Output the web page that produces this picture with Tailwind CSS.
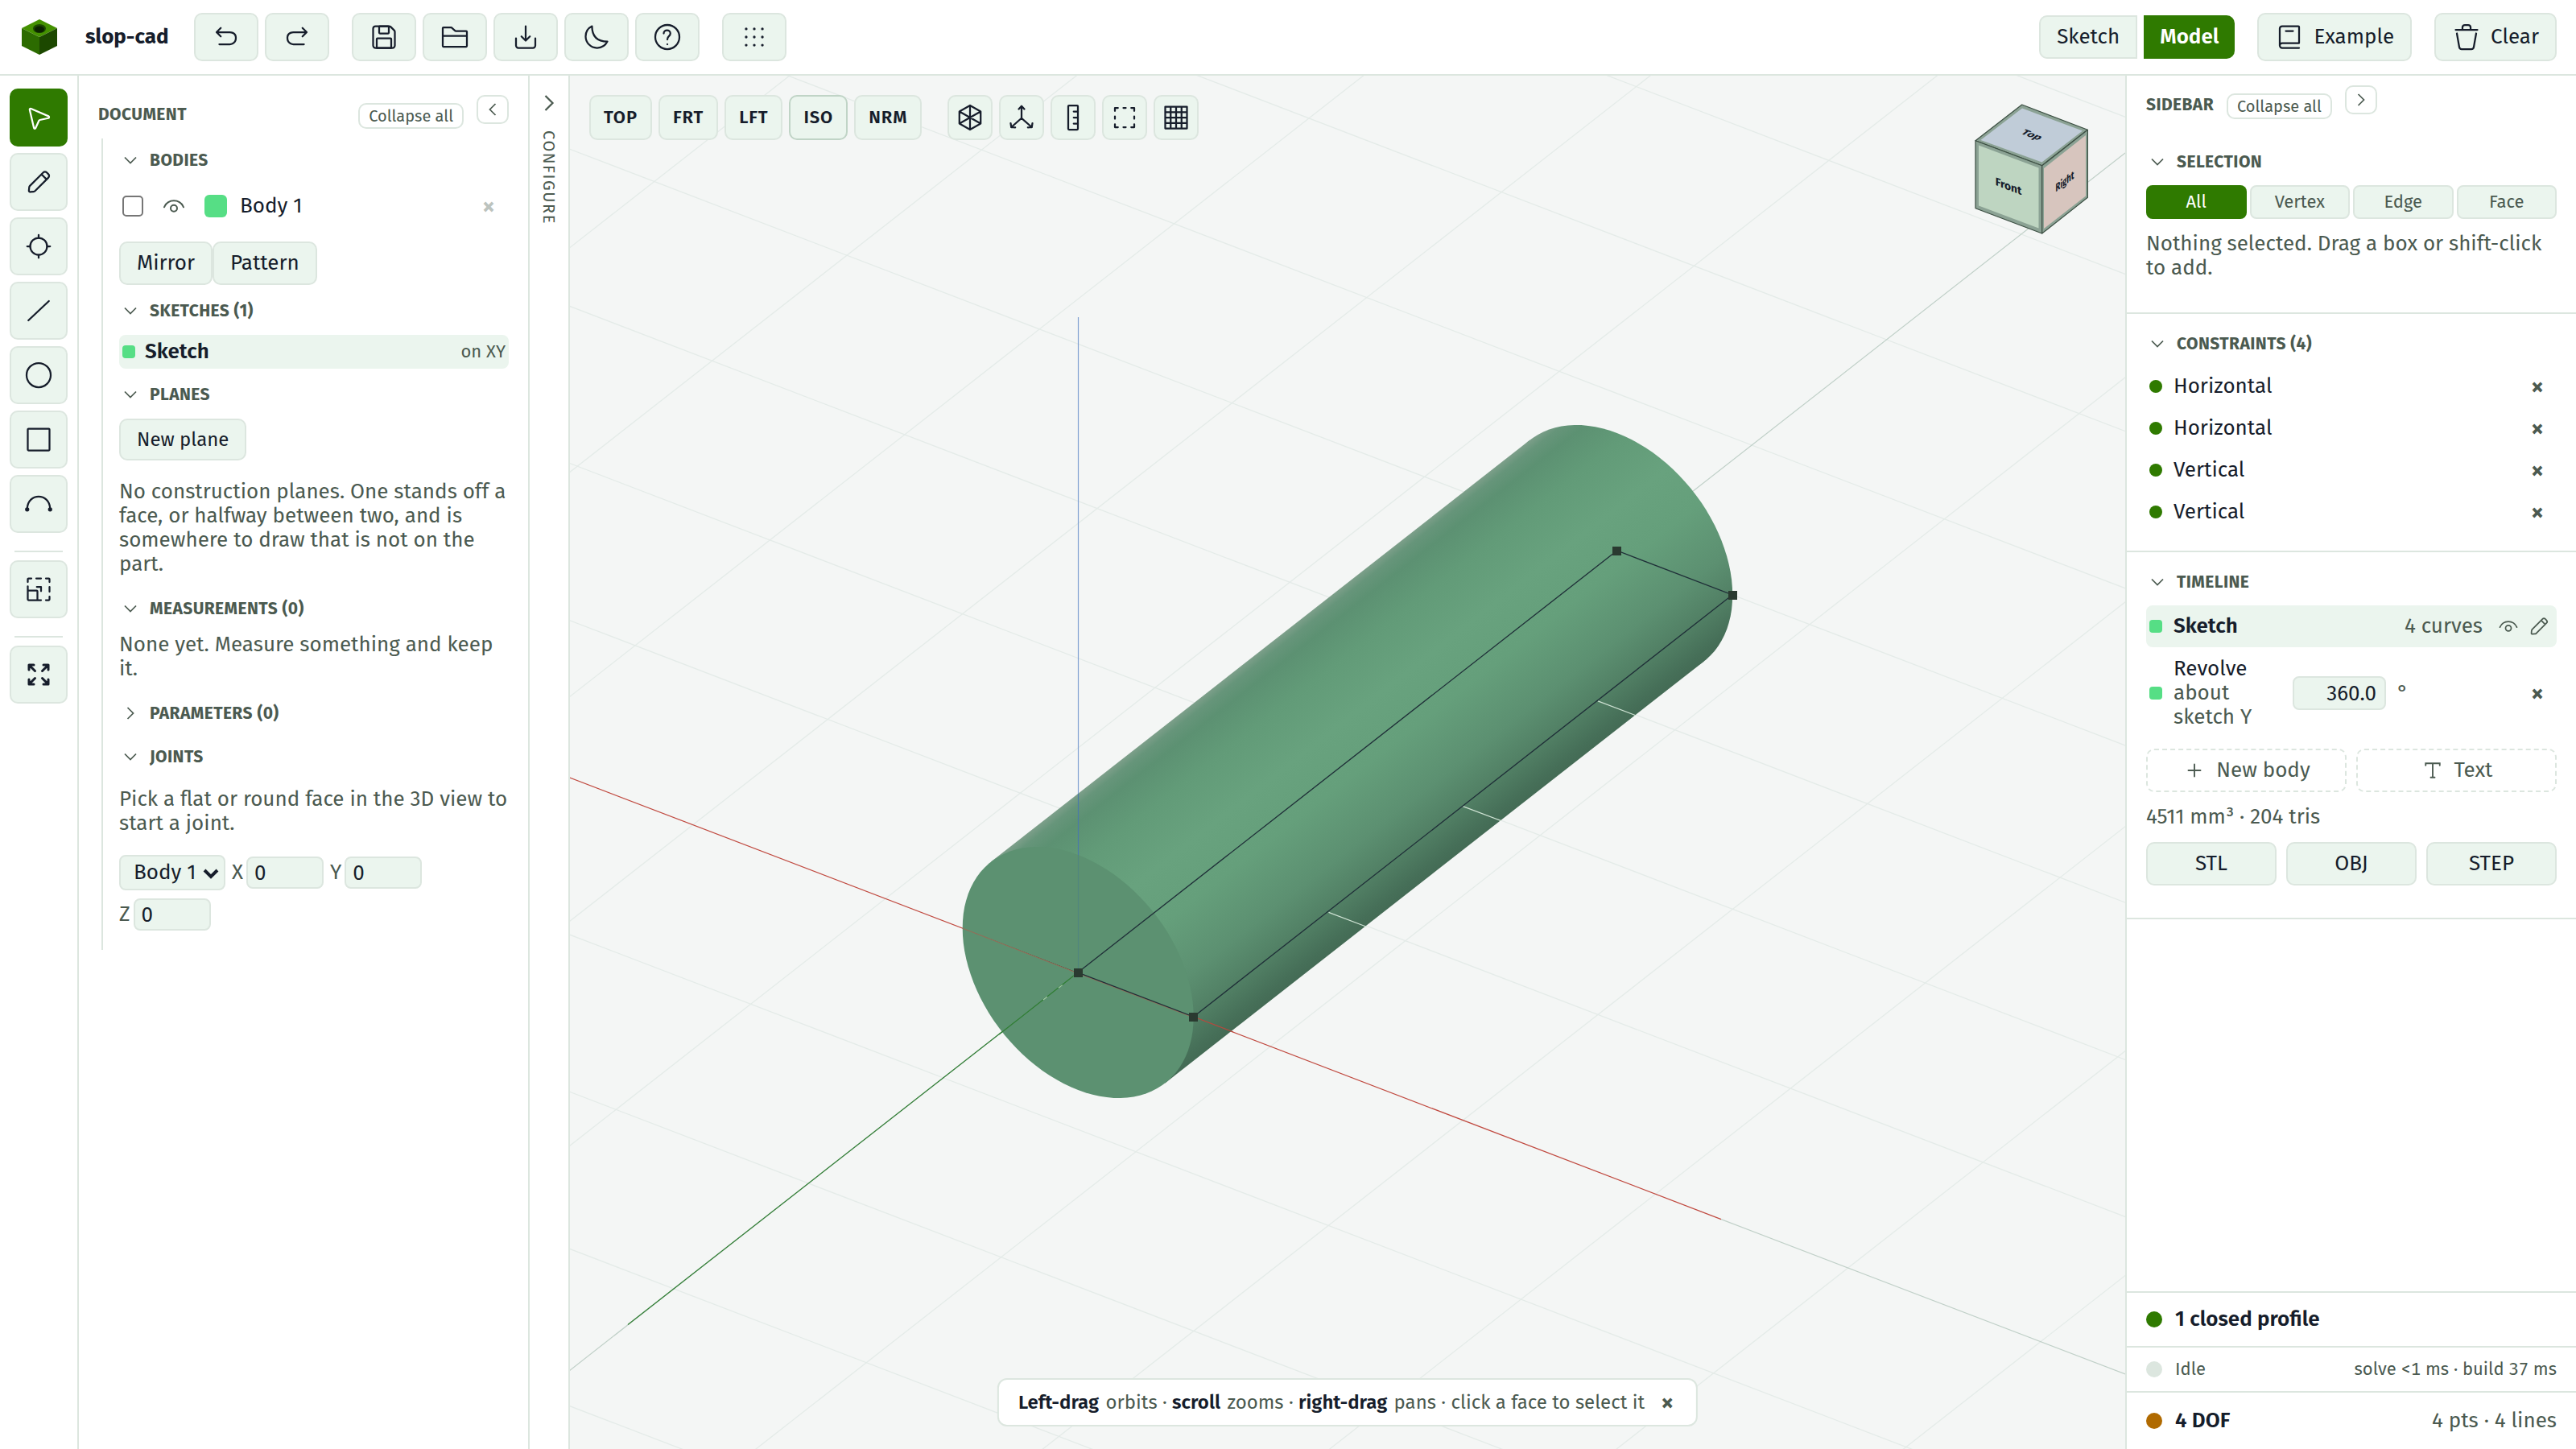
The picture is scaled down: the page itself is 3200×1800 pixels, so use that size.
<!DOCTYPE html>
<html lang="en">
	<head>
		<meta charset="UTF-8" />
		<meta name="viewport" content="width=device-width, initial-scale=1.0" />
		<title>slop-cad</title>
		<script src="https://cdn.jsdelivr.net/npm/@tailwindcss/browser@4"></script>
	</head>
	<body
		class="h-screen flex flex-col overflow-hidden bg-white text-[#161d2b] text-[26px] leading-[30px] font-['Fira_Sans','Noto_Sans',sans-serif]"
	>
		<!-- Shared icons -->
		<svg class="hidden">
			<symbol id="i-down" viewBox="0 0 24 24"><path d="M6 9l6 6 6-6" /></symbol>
			<symbol id="i-right" viewBox="0 0 24 24"><path d="M9 6l6 6-6 6" /></symbol>
			<symbol id="i-left" viewBox="0 0 24 24"><path d="M15 6l-6 6 6 6" /></symbol>
			<symbol id="i-eye" viewBox="0 0 24 24">
				<path d="M3 13C6.6 5 17.4 5 21 13" />
				<circle cx="12" cy="14" r="3" />
			</symbol>
			<symbol id="i-pencil" viewBox="0 0 24 24">
				<path
					d="M14.363 5.652l1.48-1.48a2 2 0 0 1 2.829 0l1.414 1.414a2 2 0 0 1 0 2.828l-1.48 1.48M14.363 5.652l-9.616 9.615a2 2 0 0 0-.578 1.238l-.242 2.74a1 1 0 0 0 1.084 1.085l2.741-.242a2 2 0 0 0 1.238-.578l9.616-9.616M14.363 5.652l4.243 4.242"
				/>
			</symbol>
		</svg>

		<header class="flex items-center shrink-0 h-[94px] px-6 border-b-2 border-[#dce6df] bg-white">
			<svg class="size-[50px]" viewBox="0 0 50 50">
				<path fill="#449100" d="M25 3l22 11-22 11L3 14z" />
				<path fill="#2c6b00" d="M3 14l22 11v22L3 36z" />
				<path fill="#1c4800" d="M47 14L25 25v22l22-11z" />
				<ellipse cx="25" cy="14.500" rx="8" ry="5.500" fill="#1c4800" />
				<ellipse cx="25" cy="15.500" rx="6" ry="4" fill="#0c2300" />
			</svg>
			<h1 class="mx-8 font-bold">slop-cad</h1>

			<div class="flex gap-7 [&_button]:flex [&_button]:items-center [&_button]:justify-center [&_button]:w-20 [&_button]:h-[60px] [&_button]:rounded-[10px] [&_button]:border-2 [&_button]:border-[#dce6df] [&_button]:bg-[#ebf5ee] [&_svg]:size-9 [&_svg]:fill-none [&_svg]:stroke-current [&_svg]:stroke-[1.5] [&_svg]:[stroke-linecap:round] [&_svg]:[stroke-linejoin:round]">
				<div class="flex gap-2">
					<button aria-label="Undo">
						<svg viewBox="0 0 24 24">
							<path d="M4.500 8H15s5 0 5 4.706C20 18 15 18 15 18H6.286M7.500 11.500L4 8l3.500-3.500" />
						</svg>
					</button>
					<button aria-label="Redo">
						<svg viewBox="0 0 24 24">
							<path d="M19.500 8H9s-5 0-5 4.706C4 18 9 18 9 18h8.714M16.500 11.500L20 8l-3.500-3.500" />
						</svg>
					</button>
				</div>
				<div class="flex gap-2">
					<button aria-label="Save">
						<svg viewBox="0 0 24 24">
							<path d="M3 19V5a2 2 0 0 1 2-2h11.172a2 2 0 0 1 1.414.586l2.828 2.828A2 2 0 0 1 21 7.828V19a2 2 0 0 1-2 2H5a2 2 0 0 1-2-2z" />
							<path d="M8.600 9h6.800a.6.6 0 0 0 .6-.6V3.600a.6.6 0 0 0-.6-.6H8.600a.6.6 0 0 0-.6.6v4.800a.6.6 0 0 0 .6.6zM6 13.600V21h12v-7.400a.6.6 0 0 0-.6-.6H6.600a.6.6 0 0 0-.6.6z" />
						</svg>
					</button>
					<button aria-label="Open">
						<svg viewBox="0 0 24 24">
							<path d="M2 11V4.600a.6.6 0 0 1 .6-.6h6.178a.6.6 0 0 1 .39.144l3.164 2.712a.6.6 0 0 0 .39.144H21.400a.6.6 0 0 1 .6.6V11M2 11v8.400a.6.6 0 0 0 .6.6h18.800a.6.6 0 0 0 .6-.6V11M2 11h20" />
						</svg>
					</button>
					<button aria-label="Import">
						<svg viewBox="0 0 24 24">
							<path d="M4 13v6a2 2 0 0 0 2 2h12a2 2 0 0 0 2-2v-6M12 3v12m0 0l-3.500-3.500M12 15l3.500-3.500" />
						</svg>
					</button>
					<button aria-label="Dark mode">
						<svg viewBox="0 0 24 24">
							<path d="M3 11.507A9.493 9.493 0 0 0 12.493 21c3.728 0 6.954-2.148 8.507-5.274-8.507 0-12.726-4.220-12.726-12.726C5.148 4.553 3 7.780 3 11.507z" />
						</svg>
					</button>
					<button aria-label="Help">
						<svg viewBox="0 0 24 24">
							<circle cx="12" cy="12" r="10" />
							<path d="M9 9c0-3.500 5.500-3.500 5.500 0 0 2.500-2.500 2-2.500 5M12 18.010l.01-.011" />
						</svg>
					</button>
				</div>
				<button aria-label="Snap to grid">
					<svg viewBox="0 0 24 24">
						<path
							stroke-width="2.200"
							d="M5.300 5.300h.01M12 5.300h.01M18.700 5.300h.01M5.300 12h.01M12 12h.01M18.700 12h.01M5.300 18.700h.01M12 18.700h.01M18.700 18.700h.01"
						/>
					</svg>
				</button>
			</div>

			<div class="flex items-center gap-7 ml-auto">
				<div class="flex gap-2">
					<button class="h-[54px] px-5 rounded-l-[10px] border-2 border-[#dce6df] bg-[#ebf5ee]">Sketch</button>
					<button class="h-[54px] px-5 rounded-r-[10px] bg-[#2f7a00] text-white font-semibold">Model</button>
				</div>
				<button class="flex items-center gap-3 h-[60px] px-5 rounded-[10px] border-2 border-[#dce6df] bg-[#ebf5ee]">
					<svg class="size-9 fill-none stroke-current stroke-[1.5] [stroke-linecap:round]" viewBox="0 0 24 24">
						<path d="M4 19V5a2 2 0 0 1 2-2h13.400a.6.6 0 0 1 .6.6v13.114M6 17h14M6 21h14M6 21a2 2 0 0 1 0-4M9 7h6" />
					</svg>
					Example
				</button>
				<button class="flex items-center gap-3 h-[60px] px-5 rounded-[10px] border-2 border-[#dce6df] bg-[#ebf5ee]">
					<svg class="size-9 fill-none stroke-current stroke-[1.5] [stroke-linecap:round] [stroke-linejoin:round]" viewBox="0 0 24 24">
						<path d="M20 9l-1.995 11.346A2 2 0 0 1 16.035 22h-8.070a2 2 0 0 1-1.970-1.654L4 9M21 6h-5.625M3 6h5.625m0 0V4a2 2 0 0 1 2-2h2.750a2 2 0 0 1 2 2v2m-6.750 0h6.750" />
					</svg>
					Clear
				</button>
			</div>
		</header>

		<div class="flex flex-1 min-h-0">
			<!-- Tools -->
			<nav class="flex flex-col items-center gap-2 shrink-0 w-[98px] pt-4 border-r-2 border-[#dce6df] [&_button]:flex [&_button]:items-center [&_button]:justify-center [&_button]:size-[72px] [&_button]:rounded-[10px] [&_button]:border-2 [&_svg]:size-9 [&_svg]:fill-none [&_svg]:stroke-current [&_svg]:stroke-[1.5] [&_svg]:[stroke-linecap:round] [&_svg]:[stroke-linejoin:round]">
				<button aria-label="Select" class="border-[#2f7a00] bg-[#2f7a00] text-white">
					<svg viewBox="0 0 24 24">
						<path d="M20.200 10.900L5.700 4.700c-.7-.3-1.300.2-1.100.9l3.500 15c.2.7 1.100.8 1.400.1l2.800-6.200a1 1 0 0 1 .7-.5l7-1.500c.8-.2.9-1.300.2-1.600z" />
					</svg>
				</button>
				<button aria-label="Sketch" class="border-[#dce6df] bg-[#ebf5ee]">
					<svg><use href="#i-pencil" /></svg>
				</button>
				<button aria-label="Point" class="border-[#dce6df] bg-[#ebf5ee]">
					<svg viewBox="0 0 24 24">
						<circle cx="12" cy="12" r="7" />
						<path d="M12 5V2.500M12 21.500V19M5 12H2.500M21.500 12H19" />
					</svg>
				</button>
				<button aria-label="Line" class="border-[#dce6df] bg-[#ebf5ee]">
					<svg viewBox="0 0 24 24"><path d="M3.500 20l17-16" /></svg>
				</button>
				<button aria-label="Circle" class="border-[#dce6df] bg-[#ebf5ee]">
					<svg viewBox="0 0 24 24"><circle cx="12" cy="12" r="10" /></svg>
				</button>
				<button aria-label="Rectangle" class="border-[#dce6df] bg-[#ebf5ee]">
					<svg viewBox="0 0 24 24"><rect x="3" y="3" width="18" height="18" rx=".6" /></svg>
				</button>
				<button aria-label="Arc" class="border-[#dce6df] bg-[#ebf5ee]">
					<svg viewBox="0 0 24 24">
						<path d="M2.500 16C3 2.500 21 2.500 21.500 16" />
						<circle cx="2.500" cy="16.500" r="1" fill="currentColor" />
						<circle cx="21.500" cy="16.500" r="1" fill="currentColor" />
					</svg>
				</button>
				<hr class="w-[60px] mt-3.5 mb-0.5 border-t-2 border-[#dce6df]" />
				<button aria-label="Scale" class="border-[#dce6df] bg-[#ebf5ee]">
					<svg viewBox="0 0 24 24">
						<path d="M3 6V3.600a.6.6 0 0 1 .6-.6H6M10 3h4M18 3h2.400a.6.6 0 0 1 .6.6V6M21 10v4M21 18v2.400a.6.6 0 0 1-.6.6H18M11 21h3M3 13V9.500M3 13h7.400a.6.6 0 0 1 .6.6V21H3.600a.6.6 0 0 1-.6-.6V13zM10.500 10H14v3.500" />
					</svg>
				</button>
				<hr class="w-[60px] mt-3.5 mb-0.5 border-t-2 border-[#dce6df]" />
				<button aria-label="Zoom to fit" class="border-[#dce6df] bg-[#ebf5ee]">
					<svg viewBox="0 0 24 24">
						<path stroke-width="2" d="M9 9L4 4m0 0v4m0-4h4M15 9l5-5m0 0v4m0-4h-4M9 15l-5 5m0 0v-4m0 4h4M15 15l5 5m0 0v-4m0 4h-4" />
					</svg>
				</button>
			</nav>

			<!-- Document tree -->
			<aside class="shrink-0 w-[560px] px-6 pt-6 border-r-2 border-[#dce6df] text-[#4b5a50]">
				<div class="flex items-end">
					<h2 class="flex-1 text-[21px] leading-9 font-bold tracking-[0.02em]">DOCUMENT</h2>
					<button class="h-8 px-[11px] mr-4 rounded-[10px] border-2 border-[#dce6df] text-xl leading-7">Collapse all</button>
					<button aria-label="Hide panel" class="flex items-center justify-center w-10 h-9 mb-1.5 rounded-[10px] border-2 border-[#dce6df]">
						<svg class="size-7 fill-none stroke-current stroke-[1.5]"><use href="#i-left" /></svg>
					</button>
				</div>

				<div class="mt-3 ml-1 pl-5 pt-[13px] pb-6 border-l-2 border-[#dce6df] [&_h3]:flex [&_h3]:items-center [&_h3]:h-7 [&_h3]:gap-[10px] [&_h3]:text-[21px] [&_h3]:font-bold [&_h3]:tracking-[0.02em] [&_h3_svg]:size-7 [&_h3_svg]:fill-none [&_h3_svg]:stroke-current [&_h3_svg]:stroke-[1.5]">
					<section>
						<h3><svg><use href="#i-down" /></svg>BODIES</h3>
						<div class="flex items-center gap-4 h-[54px] mt-4 pl-1 pr-4">
							<input type="checkbox" aria-label="Select Body 1" class="appearance-none size-[26px] rounded-[5px] border-2 border-[#767676] bg-white checked:bg-[#2f7a00]" />
							<button aria-label="Hide Body 1" class="flex justify-center w-11">
								<svg class="size-8 fill-none stroke-current stroke-[1.5] [stroke-linecap:round]"><use href="#i-eye" /></svg>
							</button>
							<span class="size-7 rounded-[6px] bg-[#56de85]"></span>
							<span class="flex-1 text-[#161d2b]">Body 1</span>
							<button aria-label="Delete Body 1" class="w-[18px] text-[32px] font-semibold text-[#bcc3be]">×</button>
						</div>
						<div class="flex mt-[17px] text-[#161d2b]">
							<button class="h-[54px] px-5 rounded-[10px] border-2 border-[#dce6df] bg-[#ebf5ee]">Mirror</button>
							<button class="h-[54px] px-5 rounded-[10px] border-2 border-[#dce6df] bg-[#ebf5ee]">Pattern</button>
						</div>
					</section>

					<section class="mt-[18px]">
						<h3><svg><use href="#i-down" /></svg>SKETCHES (1)</h3>
						<div class="flex items-center gap-3 h-[42px] mt-4 px-1 rounded-[8px] bg-[#ebf5ee]">
							<span class="size-4 rounded-[4px] bg-[#56de85]"></span>
							<span class="flex-1 font-semibold text-[#161d2b]">Sketch</span>
							<span class="text-[22px]">on XY</span>
						</div>
					</section>

					<section class="mt-[18px]">
						<h3><svg><use href="#i-down" /></svg>PLANES</h3>
						<button class="h-[52px] mt-4 px-5 rounded-[10px] border-2 border-[#dce6df] bg-[#ebf5ee] text-2xl text-[#161d2b]">New plane</button>
						<p class="mt-6">No construction planes. One stands off a face, or halfway between two, and is somewhere to draw that is not on the part.</p>
					</section>

					<section class="mt-[26px]">
						<h3><svg><use href="#i-down" /></svg>MEASUREMENTS (0)</h3>
						<p class="mt-4">None yet. Measure something and keep it.</p>
					</section>

					<section class="mt-[26px]">
						<h3><svg><use href="#i-right" /></svg>PARAMETERS (0)</h3>
					</section>

					<section class="mt-[26px]">
						<h3><svg><use href="#i-down" /></svg>JOINTS</h3>
						<p class="mt-6">Pick a flat or round face in the 3D view to start a joint.</p>
						<div class="flex flex-wrap items-center gap-x-2 gap-y-2.5 mt-6">
							<div class="relative text-[#161d2b]">
								<select aria-label="Body" class="appearance-none w-[132px] h-11 pl-4 rounded-[8px] border-2 border-[#dce6df] bg-[#ebf5ee]">
									<option>Body 1</option>
								</select>
								<svg class="absolute top-4 right-2 w-5 h-3.5 pointer-events-none fill-none stroke-current stroke-[4]" viewBox="0 0 20 14">
									<path d="M2 3l8 8 8-8" />
								</svg>
							</div>
							<label class="flex items-center gap-1">X
								<input type="text" value="0" class="w-24 h-10 px-2 rounded-[8px] border-2 border-[#dce6df] bg-[#ebf5ee] text-[#161d2b]" />
							</label>
							<label class="flex items-center gap-1">Y
								<input type="text" value="0" class="w-24 h-10 px-2 rounded-[8px] border-2 border-[#dce6df] bg-[#ebf5ee] text-[#161d2b]" />
							</label>
							<label class="flex items-center gap-1">Z
								<input type="text" value="0" class="w-24 h-10 px-2 rounded-[8px] border-2 border-[#dce6df] bg-[#ebf5ee] text-[#161d2b]" />
							</label>
						</div>
					</section>
				</div>
			</aside>

			<button class="flex flex-col items-center shrink-0 w-[50px] pt-4 border-r-2 border-[#dce6df] text-[#4b5a50]">
				<svg class="size-9 fill-none stroke-current stroke-[1.5]"><use href="#i-right" /></svg>
				<span class="mt-4 text-xl leading-6 tracking-[0.08em] [writing-mode:vertical-rl]">CONFIGURE</span>
			</button>

			<!-- 3D view -->
			<main class="relative flex-1 min-w-0 overflow-hidden bg-[#f4f6f5]">
				<svg class="absolute inset-0 size-full" viewBox="708 94 1932 1706" preserveAspectRatio="xMidYMid slice">
					<defs>
						<linearGradient id="side" gradientUnits="userSpaceOnUse" x1="1231" y1="1070.600" x2="1446.500" y2="1345.900">
							<stop offset="0" stop-color="#7d9f8a" />
							<stop offset=".03" stop-color="#66957a" />
							<stop offset=".08" stop-color="#5c9172" />
							<stop offset=".2" stop-color="#629b78" />
							<stop offset=".38" stop-color="#68a27e" />
							<stop offset=".55" stop-color="#659f7b" />
							<stop offset=".75" stop-color="#5c9071" />
							<stop offset=".88" stop-color="#517f64" />
							<stop offset=".97" stop-color="#466f58" />
							<stop offset="1" stop-color="#446b55" />
						</linearGradient>
					</defs>
					<g id="grid" stroke="#e4ebe8" stroke-width="1.300"></g>
					<g stroke-width="1.200">
						<path stroke="#c0d0c8" d="M700 1708.400L2640 189.900M2138 1514.600L2640 1707" />
						<path stroke="#2f7d32" d="M780 1645.500L1339 1208" />
						<path stroke="#c0493f" d="M700 963L2138 1514.600" />
						<path stroke="#7f9fd0" d="M1339.500 394V1208" />
					</g>
					<path fill="url(#side)" d="M1231 1070.600L1900.600 546.600L2116.800 821.400L1447.300 1345.400z" />
					<path id="far-end" fill="url(#side)" />
					<path stroke="#4a79a8" stroke-width="1.200" d="M1339.500 986V1062" />
					<path id="cap" fill="#5c9171" />
					<g stroke-width="1.200">
						<path stroke="#50857f" d="M1339.500 1062V1208" />
						<path stroke="#93705a" d="M1196 1153.200L1339 1209L1482.700 1264" />
						<path stroke="#b9483d" d="M1482.700 1263L1532 1282" />
						<path stroke="#2f7d32" d="M1241 1285L1339 1208" />
						<path stroke="#a5c9a8" stroke-dasharray="6 18" d="M1296 1242L1336 1211" />
						<path stroke="#cfe3d4" d="M1650.500 1133.400l47 17.800M1817.200 1001.600l47 17.800M1985 870.900l47 17.800" />
					</g>
					<path fill="none" stroke="#1f2f38" stroke-width="1.300" d="M1339 1208L2008.700 684L2152 739L1482.700 1263z" />
					<path fill="#2a3a30" d="M1334 1203h11v11h-11zM1477 1258h11v11h-11zM2003 679h11v11h-11zM2147 734h11v11h-11z" />
				</svg>

				<div class="absolute top-6 left-6 flex gap-8 [&_button]:flex [&_button]:items-center [&_button]:justify-center [&_button]:h-14 [&_button]:rounded-[10px] [&_button]:border-2 [&_button]:bg-[#ebf5ee] [&_svg]:size-9 [&_svg]:fill-none [&_svg]:stroke-current [&_svg]:stroke-[1.5] [&_svg]:[stroke-linecap:round] [&_svg]:[stroke-linejoin:round]">
					<div class="flex gap-2 text-[22px] font-semibold tracking-[0.04em]">
						<button class="px-4 border-[#dce6df]">TOP</button>
						<button class="px-4 border-[#dce6df]">FRT</button>
						<button class="px-4 border-[#dce6df]">LFT</button>
						<button class="px-4 border-[#c0d4c6]">ISO</button>
						<button class="px-4 border-[#dce6df]">NRM</button>
					</div>
					<div class="flex gap-2">
						<button aria-label="Shading" class="w-14 border-[#dce6df]">
							<svg viewBox="0 0 24 24">
								<path d="M12 2l8.800 5v10L12 22l-8.800-5V7zM12 2v20M3.200 7l17.600 10M20.800 7L3.200 17" />
							</svg>
						</button>
						<button aria-label="Axes" class="w-14 border-[#dce6df]">
							<svg viewBox="0 0 24 24">
								<path d="M12 12.500v-10M9.700 5L12 2.500 14.300 5M12 12.500L3.500 20M3 16.800l.5 3.200 3.300.2M12 12.500l8.500 7.500M21 16.800l-.5 3.200-3.300.2" />
							</svg>
						</button>
						<button aria-label="Measure" class="w-14 border-[#dce6df]">
							<svg viewBox="0 0 24 24">
								<rect x="8" y="2" width="8" height="20" rx=".6" />
								<path d="M12.500 7H16M12.500 12H16M12.500 17H16" />
							</svg>
						</button>
						<button aria-label="Box select" class="w-14 border-[#dce6df]">
							<svg viewBox="0 0 24 24">
								<path d="M4 6.500V4h2.500M11 4h2M17.500 4H20v2.500M20 11v2M20 17.500V20h-2.500M13 20h-2M6.500 20H4v-2.500M4 13v-2" />
							</svg>
						</button>
						<button aria-label="Grid" class="w-14 border-[#dce6df]">
							<svg viewBox="0 0 24 24">
								<path d="M3 3h18v18H3zM3 7.500h18M3 12h18M3 16.500h18M7.500 3v18M12 3v18M16.500 3v18" />
							</svg>
						</button>
					</div>
				</div>

				<!-- View cube -->
				<svg class="absolute top-8 right-[42px] w-[148px] h-[168px]" viewBox="0 0 148 168">
					<g fill="#8ba294" stroke="#3c4f43" stroke-width="1.200" stroke-linejoin="round">
						<path d="M61.700 4L143.400 35.300 86.700 79.700 4 48.700z" />
						<path d="M4 48.700L86.700 79.700V164L4 132.700z" />
						<path d="M86.700 79.700L143.400 35.300v84L86.700 164z" />
					</g>
					<path fill="#c0ccd8" d="M62 8.500L137 36.500 86.500 75.500 10.500 48z" />
					<path fill="#bed5c1" d="M8 54.500L82.500 82.500v75L8 129.500z" />
					<path fill="#d7c5be" d="M89 83L141 42v75.500L89 158z" />
					<g fill="#161d2b" font-size="15" font-weight="700" text-anchor="middle">
						<text transform="matrix(.92 .345 -.64 .5 71 44)">Top</text>
						<text transform="matrix(.92 .345 0 .93 45 110)">Front</text>
						<text transform="matrix(.63 -.49 0 .93 115 104)">Right</text>
					</g>
				</svg>

				<div class="absolute bottom-7 left-1/2 -translate-x-1/2 flex items-center gap-4 h-[60px] px-6 rounded-[12px] border-2 border-[#dce6df] bg-white text-2xl text-[#4b5a50] whitespace-nowrap [&_b]:mr-0.5 [&_b]:font-semibold [&_b]:text-[#161d2b]">
					<p><b>Left-drag</b> orbits · <b>scroll</b> zooms · <b>right-drag</b> pans · click a face to select it</p>
					<button aria-label="Dismiss" class="w-6 text-[32px] font-semibold">×</button>
				</div>
			</main>

			<!-- Sidebar -->
			<aside class="flex flex-col shrink-0 w-[560px] border-l-2 border-[#dce6df] text-[#4b5a50] [&_h3]:flex [&_h3]:items-center [&_h3]:h-7 [&_h3]:gap-[10px] [&_h3]:text-[21px] [&_h3]:font-bold [&_h3]:tracking-[0.02em] [&_h3_svg]:size-7 [&_h3_svg]:fill-none [&_h3_svg]:stroke-current [&_h3_svg]:stroke-[1.5]">
				<div class="flex items-end px-6 pt-3">
					<h2 class="mr-4 text-[21px] leading-9 font-bold tracking-[0.02em]">SIDEBAR</h2>
					<button class="h-8 px-[11px] mr-4 rounded-[10px] border-2 border-[#dce6df] text-xl leading-7">Collapse all</button>
					<button aria-label="Hide sidebar" class="flex items-center justify-center w-10 h-9 mb-1.5 rounded-[10px] border-2 border-[#dce6df]">
						<svg class="size-7 fill-none stroke-current stroke-[1.5]"><use href="#i-right" /></svg>
					</button>
				</div>

				<section class="px-6 pt-[39px] pb-10 border-b-2 border-[#dce6df]">
					<h3><svg><use href="#i-down" /></svg>SELECTION</h3>
					<div class="grid grid-cols-4 gap-1 mt-[15px] text-[22px]">
						<button class="h-[42px] rounded-[8px] bg-[#2f7a00] text-white">All</button>
						<button class="h-[42px] rounded-[8px] border-2 border-[#dce6df] bg-[#ebf5ee]">Vertex</button>
						<button class="h-[42px] rounded-[8px] border-2 border-[#dce6df] bg-[#ebf5ee]">Edge</button>
						<button class="h-[42px] rounded-[8px] border-2 border-[#dce6df] bg-[#ebf5ee]">Face</button>
					</div>
					<p class="mt-4">Nothing selected. Drag a box or shift-click to add.</p>
				</section>

				<section class="px-6 pt-[23px] pb-[22px] border-b-2 border-[#dce6df]">
					<h3><svg><use href="#i-down" /></svg>CONSTRAINTS (4)</h3>
					<ul class="mt-[13px] [&_li]:flex [&_li]:items-center [&_li]:gap-3.5 [&_li]:h-[52px] [&_li]:pl-1 [&_li]:pr-2 [&_button]:w-8 [&_button]:text-[32px] [&_button]:font-semibold">
						<li><i class="size-4 rounded-full bg-[#2f7a00]"></i><span class="flex-1 text-[#161d2b]">Horizontal</span><button aria-label="Remove">×</button></li>
						<li><i class="size-4 rounded-full bg-[#2f7a00]"></i><span class="flex-1 text-[#161d2b]">Horizontal</span><button aria-label="Remove">×</button></li>
						<li><i class="size-4 rounded-full bg-[#2f7a00]"></i><span class="flex-1 text-[#161d2b]">Vertical</span><button aria-label="Remove">×</button></li>
						<li><i class="size-4 rounded-full bg-[#2f7a00]"></i><span class="flex-1 text-[#161d2b]">Vertical</span><button aria-label="Remove">×</button></li>
					</ul>
				</section>

				<section class="px-6 pt-[23px] pb-10 border-b-2 border-[#dce6df]">
					<h3><svg><use href="#i-down" /></svg>TIMELINE</h3>
					<div class="flex items-center h-[52px] mt-[15px] pl-1 pr-2 rounded-[8px] bg-[#ebf5ee]">
						<i class="size-4 mr-3.5 rounded-[4px] bg-[#56de85]"></i>
						<span class="flex-1 font-semibold text-[#161d2b]">Sketch</span>
						<span class="mr-[18px]">4 curves</span>
						<button aria-label="Hide sketch" class="mr-2.5">
							<svg class="size-7 fill-none stroke-current stroke-[1.5] [stroke-linecap:round]"><use href="#i-eye" /></svg>
						</button>
						<button aria-label="Edit sketch">
							<svg class="size-7 fill-none stroke-current stroke-[1.5] [stroke-linecap:round]"><use href="#i-pencil" /></svg>
						</button>
					</div>
					<div class="flex items-center mt-3 pl-1 pr-2">
						<i class="size-4 mr-3.5 rounded-[4px] bg-[#56de85]"></i>
						<label for="angle" class="w-[132px] mr-4"><span class="text-[#161d2b]">Revolve</span> about sketch Y</label>
						<input id="angle" type="text" value="360.0" class="w-[116px] h-[42px] px-2.5 rounded-[8px] border-2 border-[#dce6df] bg-[#ebf5ee] text-right text-[#161d2b]" />
						<span class="flex-1 ml-3.5">°</span>
						<button aria-label="Remove" class="w-8 text-[32px] font-semibold">×</button>
					</div>
					<div class="grid grid-cols-2 gap-3 mt-6">
						<button class="flex items-center justify-center gap-3 h-[54px] rounded-[10px] border-2 border-dashed border-[#dce6df]">
							<svg class="size-[30px] fill-none stroke-current stroke-[1.5] [stroke-linecap:round]" viewBox="0 0 24 24"><path d="M6 12h12M12 6v12" /></svg>
							New body
						</button>
						<button class="flex items-center justify-center gap-3 h-[54px] rounded-[10px] border-2 border-dashed border-[#dce6df]">
							<svg class="size-[30px] fill-none stroke-current stroke-[1.5] [stroke-linecap:round]" viewBox="0 0 24 24"><path d="M19 7V5H5v2M12 5v14M10 19h4" /></svg>
							Text
						</button>
					</div>
					<p class="mt-4">4511 mm³ · 204 tris</p>
					<div class="grid grid-cols-3 gap-3 mt-4 text-[#161d2b]">
						<button class="h-[54px] rounded-[10px] border-2 border-[#dce6df] bg-[#ebf5ee]">STL</button>
						<button class="h-[54px] rounded-[10px] border-2 border-[#dce6df] bg-[#ebf5ee]">OBJ</button>
						<button class="h-[54px] rounded-[10px] border-2 border-[#dce6df] bg-[#ebf5ee]">STEP</button>
					</div>
				</section>

				<footer class="mt-auto [&>div]:flex [&>div]:items-center [&>div]:gap-4 [&>div]:px-6 [&>div]:border-t-2 [&>div]:border-[#dce6df] [&_i]:size-5 [&_i]:rounded-full">
					<div class="h-[68px]">
						<i class="bg-[#2f7a00]"></i>
						<span class="font-semibold text-[#161d2b]">1 closed profile</span>
					</div>
					<div class="h-14 text-[22px]">
						<i class="bg-[#dce6df]"></i>
						<span class="flex-1">Idle</span>
						<span class="tabular-nums">solve &lt;1 ms · build 37 ms</span>
					</div>
					<div class="h-[72px]">
						<i class="bg-[#b06a00]"></i>
						<span class="flex-1 font-semibold text-[#161d2b]">4 DOF</span>
						<span>4 pts · 4 lines</span>
					</div>
				</footer>
			</aside>
		</div>

		<script>
			// Ground grid: one line every 10 mm along each projected axis
			const origin = [1339.2, 1208];
			const ax = [239.2, 91.7];
			const ay = [167.4, -131];
			let lines = '';
			for (let k = -14; k <= 14; k++) {
				if (k === 0) continue;
				for (const [step, dir] of [[ay, ax], [ax, ay]]) {
					const x = origin[0] + step[0] * k;
					const y = origin[1] + step[1] * k;
					lines += `<path d="M${x - dir[0] * 20} ${y - dir[1] * 20}L${x + dir[0] * 20} ${y + dir[1] * 20}"/>`;
				}
			}
			document.getElementById('grid').innerHTML = lines;

			// The two circular ends of the cylinder
			function ring(cx, cy) {
				let d = '';
				for (let i = 0; i < 100; i++) {
					const t = (i / 100) * Math.PI * 2;
					const x = cx + 143.5 * Math.cos(t);
					const y = cy + 55 * Math.cos(t) - 146 * Math.sin(t);
					d += (i ? 'L' : 'M') + x.toFixed(1) + ' ' + y.toFixed(1);
				}
				return d + 'z';
			}
			document.getElementById('cap').setAttribute('d', ring(1339.2, 1208));
			document.getElementById('far-end').setAttribute('d', ring(2008.7, 684));
		</script>
	</body>
</html>
